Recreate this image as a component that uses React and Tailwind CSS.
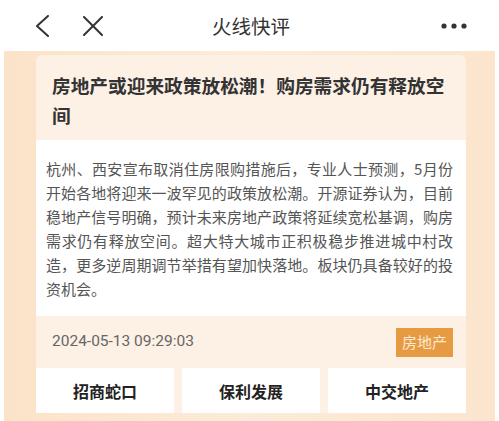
export default function App() {
  const cjk = { fontFamily: '"Noto Sans CJK SC", "Noto Sans", sans-serif' };
  const lines = [
    "杭州、西安宣布取消住房限购措施后，专业人士预测，5月份",
    "开始各地将迎来一波罕见的政策放松潮。开源证券认为，目前",
    "稳地产信号明确，预计未来房地产政策将延续宽松基调，购房",
    "需求仍有释放空间。超大特大城市正积极稳步推进城中村改",
    "造，更多逆周期调节举措有望加快落地。板块仍具备较好的投",
  ];
  return (
    <div className="w-[499px] h-[421px] overflow-hidden bg-white flex flex-col font-['Noto_Sans_CJK_SC',sans-serif]">
      {/* header */}
      <div className="h-[51px] shrink-0 grid grid-cols-[1fr_auto_1fr] items-center">
        <div className="flex items-center pl-[35px] gap-[33px]">
          <svg width="15" height="22" viewBox="0 0 15 22" fill="none">
            <polyline points="13,1 2,11 13,21" stroke="#333" strokeWidth="2" strokeLinecap="round" strokeLinejoin="round" />
          </svg>
          <svg width="20" height="20" viewBox="0 0 20 20" fill="none">
            <line x1="1" y1="1" x2="19" y2="19" stroke="#333" strokeWidth="2" strokeLinecap="round" />
            <line x1="19" y1="1" x2="1" y2="19" stroke="#333" strokeWidth="2" strokeLinecap="round" />
          </svg>
        </div>
        <div className="text-[19.5px] text-[#333] leading-none pl-[3px]" style={cjk}>火线快评</div>
        <div className="flex justify-end pr-[32px]">
          <svg width="26" height="6" viewBox="0 0 26 6">
            <circle cx="3" cy="3" r="2.6" fill="#333" />
            <circle cx="13" cy="3" r="2.6" fill="#333" />
            <circle cx="23" cy="3" r="2.6" fill="#333" />
          </svg>
        </div>
      </div>

      {/* peach area */}
      <div className="flex-1 mx-[4px] bg-linear-to-r from-[#fbe3c9] via-[#fdebd9] to-[#fbe5cd] pl-[32px] pr-[29px] pt-[4px]">
        <div className="w-[430px] bg-[#fdf0e5] rounded-t-[6px] flex flex-col">
          {/* title */}
          <div className="pt-[15px] pb-[10px] pl-[16px] text-[18.7px] leading-[30px] font-bold text-[#333]" style={cjk}>
            <div className="whitespace-nowrap">房地产或迎来政策放松潮！购房需求仍有释放空</div>
            <div>间</div>
          </div>
          {/* body */}
          <div className="bg-white pt-[17px] pb-[15px] pl-[10px]">
            <div className="w-[407px] text-[15px] leading-[24px] text-[#555]" style={cjk}>
              {lines.map((l, i) => (
                <div key={i} className="whitespace-nowrap text-justify [text-align-last:justify]">{l}</div>
              ))}
              <div>资机会。</div>
            </div>
          </div>
          {/* footer */}
          <div className="h-[52px] flex items-center justify-between pl-[16px] pr-[13px]">
            <span className="text-[15.5px] text-[#666] font-['Roboto',sans-serif]">2024-05-13 09:29:03</span>
            <span className="h-[29px] w-[57px] flex items-center justify-center bg-[#e69b42] text-[#fde8cf] text-[15px]" style={cjk}>房地产</span>
          </div>
          {/* buttons */}
          <div className="grid grid-cols-3 gap-[8px] h-[45px]">
            {["招商蛇口", "保利发展", "中交地产"].map((t) => (
              <div key={t} className="bg-white flex items-center justify-center text-[16px] font-bold text-[#222]" style={cjk}>
                {t}
              </div>
            ))}
          </div>
        </div>
      </div>
    </div>
  );
}
